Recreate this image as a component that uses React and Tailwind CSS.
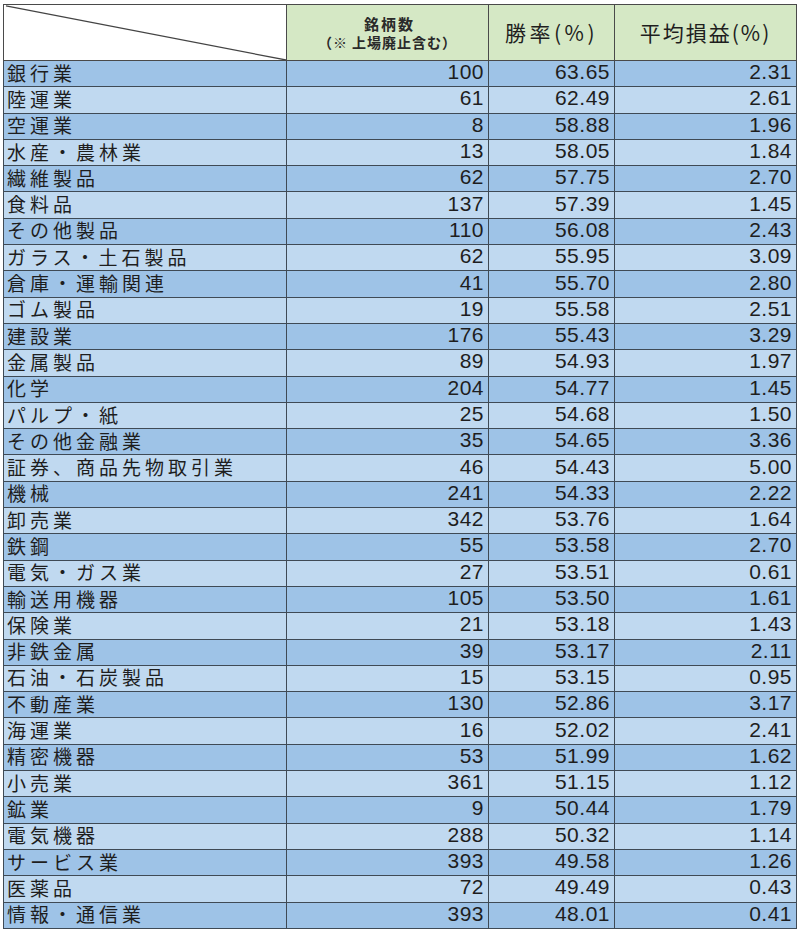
import React from "react";

const rows = [
  ["銀行業", "100", "63.65", "2.31"],
  ["陸運業", "61", "62.49", "2.61"],
  ["空運業", "8", "58.88", "1.96"],
  ["水産・農林業", "13", "58.05", "1.84"],
  ["繊維製品", "62", "57.75", "2.70"],
  ["食料品", "137", "57.39", "1.45"],
  ["その他製品", "110", "56.08", "2.43"],
  ["ガラス・土石製品", "62", "55.95", "3.09"],
  ["倉庫・運輸関連", "41", "55.70", "2.80"],
  ["ゴム製品", "19", "55.58", "2.51"],
  ["建設業", "176", "55.43", "3.29"],
  ["金属製品", "89", "54.93", "1.97"],
  ["化学", "204", "54.77", "1.45"],
  ["パルプ・紙", "25", "54.68", "1.50"],
  ["その他金融業", "35", "54.65", "3.36"],
  ["証券、商品先物取引業", "46", "54.43", "5.00"],
  ["機械", "241", "54.33", "2.22"],
  ["卸売業", "342", "53.76", "1.64"],
  ["鉄鋼", "55", "53.58", "2.70"],
  ["電気・ガス業", "27", "53.51", "0.61"],
  ["輸送用機器", "105", "53.50", "1.61"],
  ["保険業", "21", "53.18", "1.43"],
  ["非鉄金属", "39", "53.17", "2.11"],
  ["石油・石炭製品", "15", "53.15", "0.95"],
  ["不動産業", "130", "52.86", "3.17"],
  ["海運業", "16", "52.02", "2.41"],
  ["精密機器", "53", "51.99", "1.62"],
  ["小売業", "361", "51.15", "1.12"],
  ["鉱業", "9", "50.44", "1.79"],
  ["電気機器", "288", "50.32", "1.14"],
  ["サービス業", "393", "49.58", "1.26"],
  ["医薬品", "72", "49.49", "0.43"],
  ["情報・通信業", "393", "48.01", "0.41"],
];

const cell = "border-[1.5px] border-[#3f4a55] py-0 h-[26.3px] align-middle";

export default function App() {
  return (
    <div className="w-[800px] h-[931px] bg-white pt-[4px] pl-[3px]">
      <table className="table-fixed border-collapse text-[#1e1e1e] font-['Liberation_Sans','Noto_Sans_CJK_JP',sans-serif]">
        <colgroup>
          <col className="w-[283px]" />
          <col className="w-[202px]" />
          <col className="w-[126px]" />
          <col className="w-[182px]" />
        </colgroup>
        <thead>
          <tr className="h-[56px]">
            <th className="relative border-[1.5px] border-[#4a4a4a] bg-white p-0">
              <svg className="absolute inset-0 w-full h-full" viewBox="0 0 283 56" preserveAspectRatio="none">
                <line x1="2" y1="1" x2="283" y2="56" stroke="#444" strokeWidth="1.3" />
              </svg>
            </th>
            <th className="border-[1.5px] border-[#4a4a4a] bg-[#d5e8c5] p-0 text-center font-bold font-['Noto_Sans_CJK_JP',sans-serif] text-[#2a2a2a]">
              <div className="text-[15px] leading-[19px] tracking-[2px] pl-[4px]">銘柄数</div>
              <div className="text-[14px] leading-[19px] tracking-[1px]">（※ 上場廃止含む）</div>
            </th>
            <th className="border-[1.5px] border-[#4a4a4a] bg-[#d5e8c5] p-0 text-center font-normal font-['Noto_Sans_CJK_JP',sans-serif]">
              <span className="inline-block text-[21px] leading-[24px] tracking-[3.5px]">勝率(%)</span>
            </th>
            <th className="border-[1.5px] border-[#4a4a4a] bg-[#d5e8c5] p-0 text-center font-normal font-['Noto_Sans_CJK_JP',sans-serif]">
              <span className="inline-block text-[21px] leading-[24px] tracking-[2px]">平均損益(%)</span>
            </th>
          </tr>
        </thead>
        <tbody>
          {rows.map((r, i) => (
            <tr
              key={i}
              className={i % 2 === 0 ? "bg-[#9ec3e7]" : "bg-[#c0d9f0]"}
            >
              <td className={cell + " pl-[3px] whitespace-nowrap font-['Noto_Sans_CJK_JP',sans-serif]"}>
                <span className="inline-block text-[19px] leading-[22px] tracking-[4px]">{r[0]}</span>
              </td>
              <td className={cell + " pr-[4px] text-right"}>
                <span className="inline-block text-[21px] leading-[22px] tracking-[0.5px]">{r[1]}</span>
              </td>
              <td className={cell + " pr-[4px] text-right"}>
                <span className="inline-block text-[21px] leading-[22px] tracking-[0.5px]">{r[2]}</span>
              </td>
              <td className={cell + " pr-[4px] text-right"}>
                <span className="inline-block text-[21px] leading-[22px] tracking-[0.5px]">{r[3]}</span>
              </td>
            </tr>
          ))}
        </tbody>
      </table>
    </div>
  );
}
